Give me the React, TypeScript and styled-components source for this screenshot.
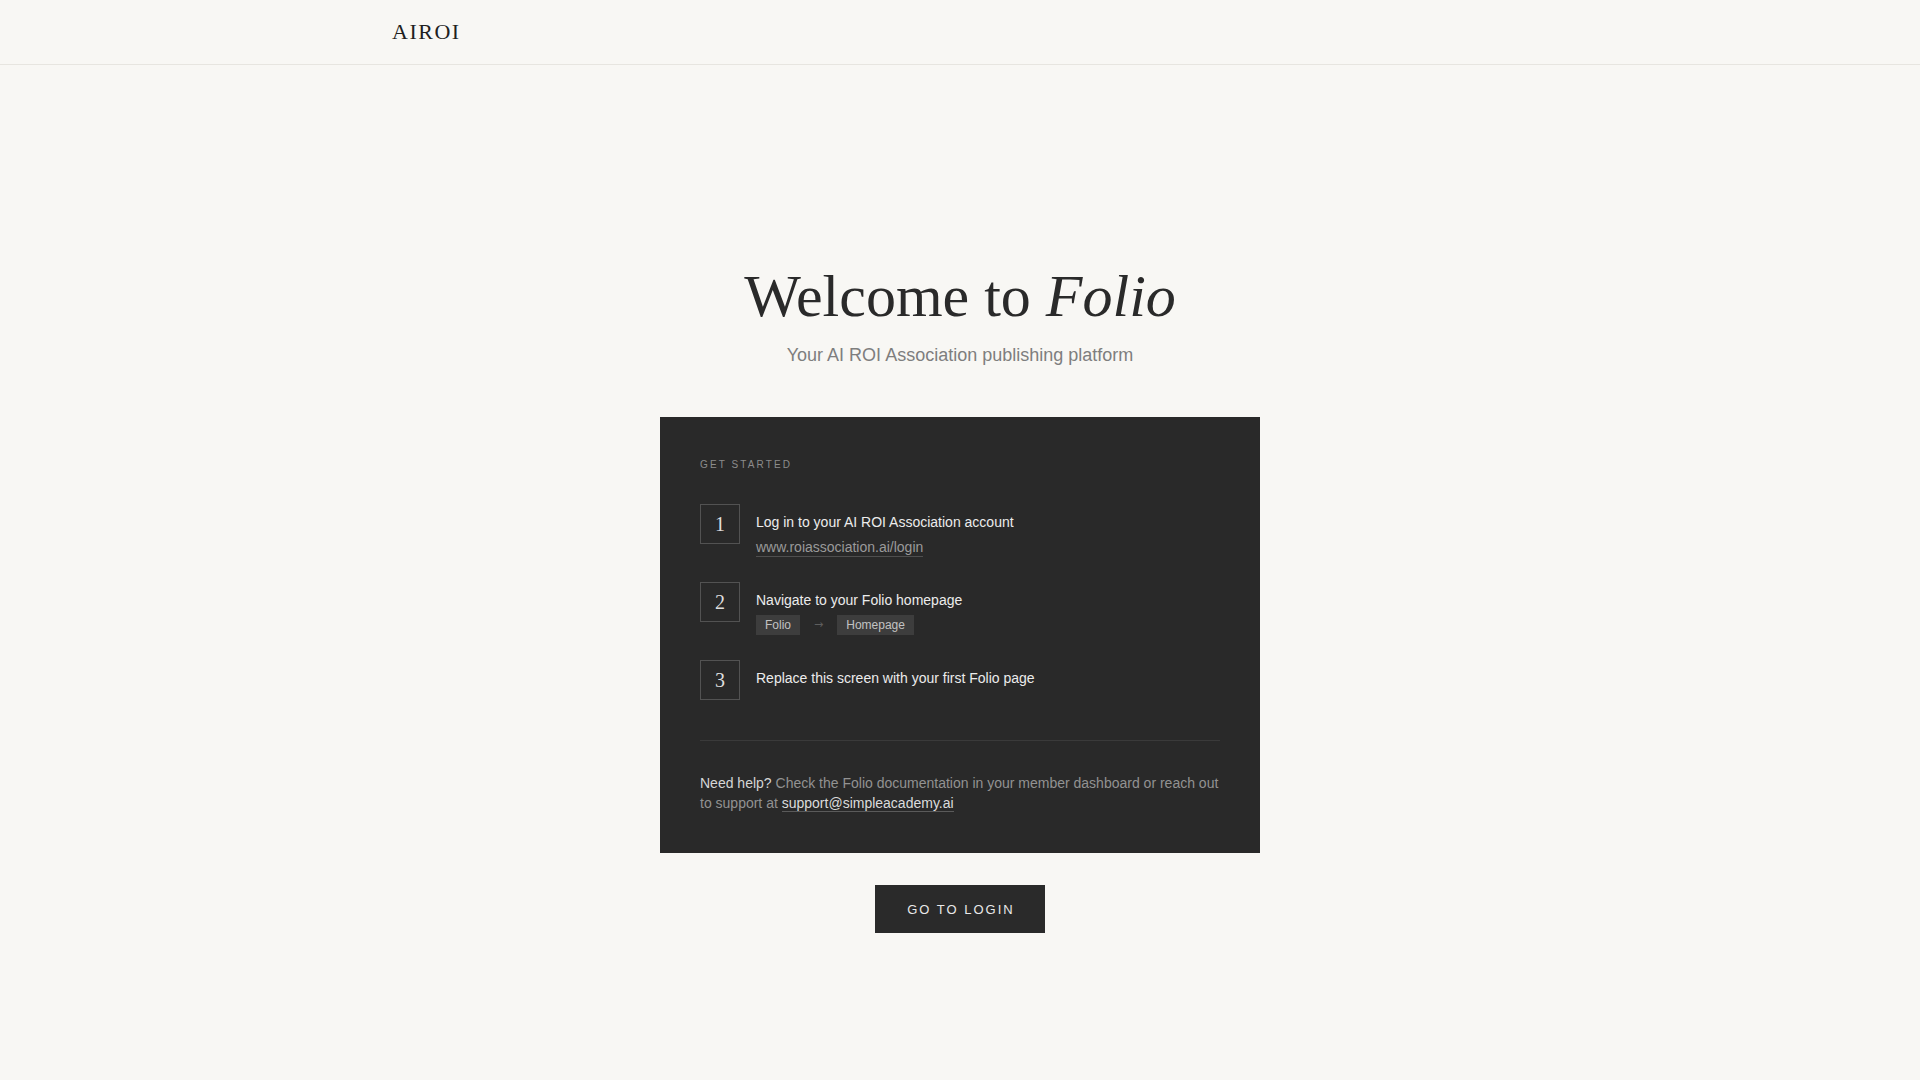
import React from "react";
import styled, { createGlobalStyle } from "styled-components";

const GlobalStyle = createGlobalStyle`
  html, body {
    margin: 0;
    padding: 0;
    background: #f8f7f4;
  }
  body {
    font-family: "Liberation Sans", Arial, sans-serif;
    color: #2a2a2a;
    -webkit-font-smoothing: antialiased;
  }
  * { box-sizing: border-box; }
`;

const Page = styled.div`
  min-height: 100vh;
  display: flex;
  flex-direction: column;
  background: #f8f7f4;
`;

const Header = styled.header`
  height: 65px;
  border-bottom: 1px solid #e7e5e0;
`;

const HeaderInner = styled.div`
  max-width: 1200px;
  height: 100%;
  margin: 0 auto;
  padding: 0 32px;
  display: flex;
  align-items: center;
`;

const Logo = styled.div`
  font-family: "Liberation Serif", "Times New Roman", serif;
  font-size: 22px;
  letter-spacing: 1.5px;
  color: #1f1f1f;
`;

const Main = styled.main`
  flex: 1;
  display: flex;
  flex-direction: column;
  align-items: center;
  padding: 198px 24px 80px;
`;

const Title = styled.h1`
  margin: 0;
  font-family: "Liberation Serif", "Times New Roman", serif;
  font-weight: 400;
  font-size: 60px;
  line-height: 66px;
  color: #2a2a2a;
  text-align: center;

  em {
    font-style: italic;
  }
`;

const Subtitle = styled.p`
  margin: 13px 0 0;
  font-size: 18px;
  line-height: 27px;
  color: #7e7e7e;
  text-align: center;
`;

const Card = styled.section`
  margin-top: 48px;
  width: 600px;
  background: #292929;
  padding: 40px;
`;

const Label = styled.div`
  font-size: 10px;
  line-height: 15px;
  letter-spacing: 2.1px;
  text-transform: uppercase;
  color: #8c8c8c;
  margin-bottom: 32px;
`;

const Steps = styled.ol`
  list-style: none;
  margin: 0;
  padding: 0;
  display: flex;
  flex-direction: column;
  gap: 24px;
`;

const Step = styled.li`
  display: flex;
  align-items: flex-start;
  gap: 16px;
`;

const StepNumber = styled.div`
  flex: none;
  width: 40px;
  height: 40px;
  border: 1px solid #525252;
  display: flex;
  align-items: center;
  justify-content: center;
  font-family: "Liberation Serif", "Times New Roman", serif;
  font-size: 20px;
  color: #dedede;
`;

const StepBody = styled.div<{ $gap: number }>`
  padding-top: 8px;
  display: flex;
  flex-direction: column;
  gap: ${(p) => p.$gap}px;
`;

const StepTitle = styled.div`
  font-size: 14px;
  line-height: 20px;
  color: #ececec;
`;

const StepLink = styled.a`
  align-self: flex-start;
  font-size: 14px;
  line-height: 18px;
  color: #9a9a9a;
  text-decoration: none;
  border-bottom: 1px solid #4f4f4f;
  margin-bottom: 1px;
`;

const Crumbs = styled.div`
  display: flex;
  align-items: flex-start;
  gap: 14px;
  height: 21px;
`;

const Tag = styled.span`
  display: inline-block;
  background: #3d3d3d;
  color: #c2c2c2;
  font-size: 12px;
  line-height: 20px;
  padding: 0 9px;
`;

const Arrow = styled.span`
  font-family: "DejaVu Sans", sans-serif;
  font-size: 11px;
  line-height: 20px;
  color: #5e5e5e;
`;

const Divider = styled.hr`
  border: none;
  border-top: 1px solid #3a3a3a;
  margin: 40px 0 32px;
`;

const Help = styled.p`
  margin: 0;
  font-size: 14px;
  line-height: 20px;
  color: #929292;

  strong {
    font-weight: 400;
    color: #d6d6d6;
  }
`;

const HelpLink = styled.a`
  color: #dcdcdc;
  text-decoration: none;
  border-bottom: 1px solid #5a5a5a;
`;

const Button = styled.button`
  margin-top: 32px;
  height: 48px;
  padding: 0 30px 0 32px;
  background: #2a2a2a;
  border: none;
  color: #e9e9e9;
  font-family: "Liberation Sans", Arial, sans-serif;
  font-size: 13px;
  letter-spacing: 2px;
  text-transform: uppercase;
  cursor: pointer;
`;

export default function App() {
  return (
    <>
      <GlobalStyle />
      <Page>
        <Header>
          <HeaderInner>
            <Logo>AIROI</Logo>
          </HeaderInner>
        </Header>
        <Main>
          <Title>
            Welcome to <em>Folio</em>
          </Title>
          <Subtitle>Your AI ROI Association publishing platform</Subtitle>
          <Card>
            <Label>Get Started</Label>
            <Steps>
              <Step>
                <StepNumber>1</StepNumber>
                <StepBody $gap={6}>
                  <StepTitle>Log in to your AI ROI Association account</StepTitle>
                  <StepLink href="#">www.roiassociation.ai/login</StepLink>
                </StepBody>
              </Step>
              <Step>
                <StepNumber>2</StepNumber>
                <StepBody $gap={5}>
                  <StepTitle>Navigate to your Folio homepage</StepTitle>
                  <Crumbs>
                    <Tag>Folio</Tag>
                    <Arrow>→</Arrow>
                    <Tag>Homepage</Tag>
                  </Crumbs>
                </StepBody>
              </Step>
              <Step>
                <StepNumber>3</StepNumber>
                <StepBody $gap={4}>
                  <StepTitle>Replace this screen with your first Folio page</StepTitle>
                </StepBody>
              </Step>
            </Steps>
            <Divider />
            <Help>
              <strong>Need help?</strong> Check the Folio documentation in your
              member dashboard or reach out to support at{" "}
              <HelpLink href="#">support@simpleacademy.ai</HelpLink>
            </Help>
          </Card>
          <Button>Go to Login</Button>
        </Main>
      </Page>
    </>
  );
}
